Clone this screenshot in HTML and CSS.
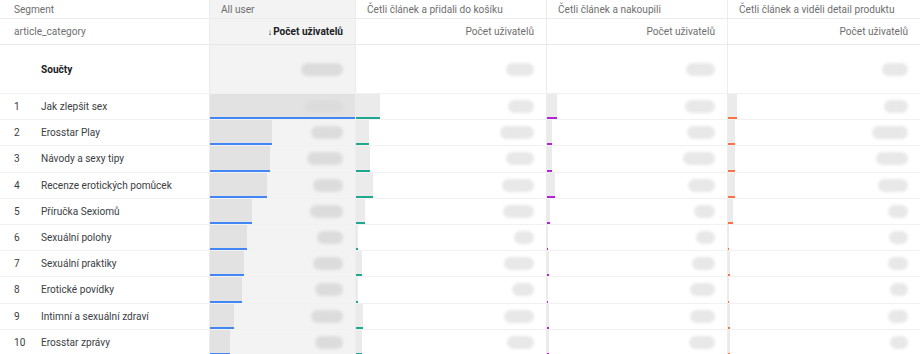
FILE: index.html
```html
<!DOCTYPE html>
<html lang="cs">
<head>
  <meta charset="UTF-8">
  <title>Segmenty – Počet uživatelů</title>
  <link rel="stylesheet" href="styles.css">
</head>
<body>
  <div class="table">
    <div class="row head">
      <div class="cell first">Segment</div>
      <div class="cell c1 left">All user</div>
      <div class="cell c2 left">Četli článek a přidali do košíku</div>
      <div class="cell c3 left">Četli článek a nakoupili</div>
      <div class="cell c4 left">Četli článek a viděli detail produktu</div>
    </div>
    <div class="row head sub">
      <div class="cell first">article_category</div>
      <div class="cell c1 sorted"><span class="arrow">↓</span>Počet uživatelů</div>
      <div class="cell c2">Počet uživatelů</div>
      <div class="cell c3">Počet uživatelů</div>
      <div class="cell c4">Počet uživatelů</div>
    </div>
    <div class="row totals">
      <div class="cell first"><span class="idx"></span><strong>Součty</strong></div>
      <div class="cell c1"><span class="blur" style="width:42px"></span></div>
      <div class="cell c2"><span class="blur" style="width:28px"></span></div>
      <div class="cell c3"><span class="blur" style="width:29px"></span></div>
      <div class="cell c4"><span class="blur" style="width:26px"></span></div>
    </div>
  </div>

  <script>
    // widths of the bars in px per column (All user, košík, nakoupili, detail)
    const rows = [
      ['Jak zlepšit sex', 145, 24, 10, 9],
      ['Erosstar Play', 62, 13, 5, 7],
      ['Návody a sexy tipy', 60, 14, 5, 7],
      ['Recenze erotických pomůcek', 57, 17, 8, 7],
      ['Příručka Sexiomů', 42, 9, 3, 5],
      ['Sexuální polohy', 37, 2, 1, 1],
      ['Sexuální praktiky', 34, 6, 2, 2],
      ['Erotické povídky', 32, 2, 1, 1],
      ['Intimní a sexuální zdraví', 24, 7, 2, 2],
      ['Erosstar zprávy', 20, 6, 2, 2]
    ];
    const pills = [
      [38, 26, 30, 24], [32, 34, 28, 36], [36, 28, 32, 32], [30, 32, 27, 30], [33, 31, 21, 20],
      [26, 20, 19, 19], [30, 30, 23, 20], [28, 22, 25, 18], [32, 30, 25, 20], [28, 27, 26, 18]
    ];
    const table = document.querySelector('.table');

    rows.forEach((r, i) => {
      const row = document.createElement('div');
      row.className = 'row data';
      let html = '<div class="cell first"><span class="idx">' + (i + 1) + '</span>' + r[0] + '</div>';
      for (let c = 1; c <= 4; c++) {
        html += '<div class="cell c' + c + ' bar" style="--w:' + r[c] + 'px">' +
          '<span class="blur" style="width:' + pills[i][c - 1] + 'px"></span></div>';
      }
      row.innerHTML = html;
      table.appendChild(row);
    });
  </script>
</body>
</html>
```

FILE: styles.css
```css
html {
  box-sizing: border-box;
}
*, *:before, *:after {
  box-sizing: inherit;
}
body { margin: 0; background: #fff; font-family: Roboto, "Noto Sans", Arial, sans-serif; font-size: 10.1px; color: #3c4043; }

.table { width: 920px; }
.row { display: grid; grid-template-columns: 209px 146px 191px 181px 193px; border-bottom: 1px solid #f1f1f1; }
.cell { display: flex; align-items: center; justify-content: flex-end; padding: 0 12px; white-space: nowrap; }
.cell.first { justify-content: flex-start; padding-left: 14px; }
.cell.left { justify-content: flex-start; padding-left: 11px; }
.c1 { background: #f3f3f3; border-left: 1px solid #ececec; }
.c2, .c3, .c4 { border-left: 1px solid #ececec; }

.head { color: #6f6f6f; }
.head .cell { height: 18px; }
.head.sub { border-bottom-color: #e8e8e8; }
.head.sub .cell { height: 25px; }
.head:first-child { border-bottom-color: #ececec; }
.sorted { color: #202124; font-weight: 700; }
.arrow { font-weight: 400; font-size: 9px; margin-right: 1px; }

.totals .cell { height: 48px; }
.totals strong { color: #202124; font-weight: 700; }

.data .cell { height: 25.2px; }
.data .first { color: #3c4043; }
.idx { display: inline-block; width: 27px; }

.bar { --fill: #ebebeb; --line: #4285f4;
  background:
    linear-gradient(var(--line), var(--line)) no-repeat left bottom / var(--w) 2px,
    linear-gradient(var(--fill), var(--fill)) no-repeat left top / var(--w) 100%; }
.bar.c1 { --fill: #e2e2e2; background-color: #f3f3f3; }
.bar.c2 { --line: #1fa88f; }
.bar.c3 { --line: #b324d4; }
.bar.c4 { --line: #ff7043; }

.blur { display: inline-block; height: 13px; border-radius: 7px; background: #e8e8e8; filter: blur(1.5px); }
.c1 .blur { background: #dcdcdc; }
```
